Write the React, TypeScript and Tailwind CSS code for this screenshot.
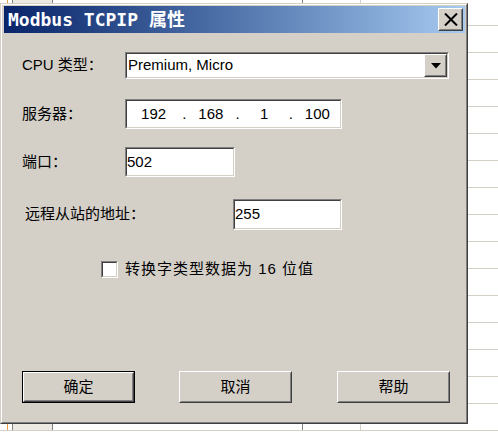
import React from 'react';

// Hoja de cálculo de fondo (solo se ven los bordes)
const rows = Array.from({ length: 16 });

const Spreadsheet: React.FC = () => (
  <div className="flex flex-col">
    {rows.map((_, i) => (
      <div
        key={i}
        className={`flex border-b border-[#d4d0c8] ${i === 0 ? 'h-[26px]' : 'h-[27px]'}`}
      >
        <div className="w-[8px] border-r border-[#e8a040]" />
        <div className="w-[4px]" />
        <div className="w-[41px] bg-[#ece9e2] border-l border-r border-[#808080]" />
        <div className="w-[250px] border-r border-[#808080]" />
        <div className="w-[58px] border-r border-[#d4d0c8]" />
        <div className="flex-1" />
      </div>
    ))}
  </div>
);

// Campo hundido estilo Windows clásico
const Sunken: React.FC<{ className?: string; children?: React.ReactNode }> = ({ className, children }) => (
  <div className={`border border-t-[#808080] border-l-[#808080] border-b-white border-r-white ${className ?? ''}`}>
    <div className="h-full w-full border border-t-[#404040] border-l-[#404040] border-b-[#d4d0c8] border-r-[#d4d0c8] bg-white flex items-center">
      {children}
    </div>
  </div>
);

const Raised: React.FC<{ className?: string; children?: React.ReactNode }> = ({ className, children }) => (
  <div className={`border border-t-white border-l-white border-b-[#404040] border-r-[#404040] bg-[#d4d0c8] ${className ?? ''}`}>
    <div className="h-full w-full border border-t-[#d4d0c8] border-l-[#d4d0c8] border-b-[#808080] border-r-[#808080] flex items-center justify-center">
      {children}
    </div>
  </div>
);

const Octet: React.FC<{ value: string; dot?: boolean }> = ({ value, dot }) => (
  <div className="flex-1 flex items-center h-full">
    {dot && <span className="w-[8px] pl-[2px]">.</span>}
    <span className="flex-1 text-center">{value}</span>
  </div>
);

const App: React.FC = () => {
  return (
    <div
      className="relative w-[498px] h-[438px] overflow-hidden bg-white text-black text-[15px]"
      style={{ fontFamily: '"Liberation Sans", "Noto Sans CJK SC", sans-serif' }}
    >
      <Spreadsheet />

      {/* Ventana de diálogo */}
      <div className="absolute left-0 top-[3px] w-[468px] h-[421px] border border-t-[#d4d0c8] border-l-[#d4d0c8] border-b-[#404040] border-r-[#404040]">
        <div className="h-full w-full border border-t-white border-l-white border-b-[#808080] border-r-[#808080] bg-[#d4d0c8] p-[1px] pl-[2px] flex flex-col">
          {/* Barra de título */}
          <div className="h-[27px] flex items-center justify-between bg-gradient-to-r from-[#0a246a] to-[#a6caf0] pl-[4px] pr-[2px]">
            <span
              className="text-white font-bold text-[18px] leading-none"
              style={{ fontFamily: '"DejaVu Sans Mono", "Noto Sans CJK SC", monospace' }}
            >
              Modbus TCPIP 属性
            </span>
            <Raised className="w-[25px] h-[23px]">
              <svg width="14" height="13" viewBox="0 0 14 13">
                <path d="M1 0.5 L13 12.5 M13 0.5 L1 12.5" stroke="black" strokeWidth="2" />
              </svg>
            </Raised>
          </div>

          {/* Contenido */}
          <div className="flex flex-col pl-[18px]">
            <div className="flex items-center mt-[19px] h-[27px]">
              <span className="w-[103px]">CPU 类型：</span>
              <Sunken className="w-[324px] h-[27px]">
                <span className="flex-1 pl-[1px]">Premium, Micro</span>
                <Raised className="w-[23px] h-[23px]">
                  <svg width="10" height="6" viewBox="0 0 10 6">
                    <path d="M0 0 H10 L5 5.5 Z" fill="black" />
                  </svg>
                </Raised>
              </Sunken>
            </div>

            <div className="flex items-center mt-[20px] h-[30px]">
              <span className="w-[103px]">服务器：</span>
              <Sunken className="w-[217px] h-[30px]">
                <Octet value="192" />
                <Octet value="168" dot />
                <Octet value="1" dot />
                <Octet value="100" dot />
              </Sunken>
            </div>

            <div className="flex items-center mt-[18px] h-[30px]">
              <span className="w-[103px]">端口：</span>
              <Sunken className="w-[110px] h-[30px]">
                <span>502</span>
              </Sunken>
            </div>

            <div className="flex items-center mt-[22px] h-[31px]">
              <span className="w-[211px] pl-[3px]">远程从站的地址：</span>
              <Sunken className="w-[109px] h-[31px]">
                <span>255</span>
              </Sunken>
            </div>

            <div className="flex items-center mt-[31px] h-[17px] pl-[79px]">
              <Sunken className="w-[17px] h-[17px]" />
              <span className="ml-[7px] tracking-[1px]">转换字类型数据为 16 位值</span>
            </div>

            {/* Botones */}
            <div className="flex items-center mt-[93px] gap-[44px]">
              <div className="w-[113px] h-[32px] border border-black">
                <Raised className="w-full h-full">确定</Raised>
              </div>
              <Raised className="w-[113px] h-[32px]">取消</Raised>
              <Raised className="w-[113px] h-[32px] ml-[1px]">帮助</Raised>
            </div>
          </div>
        </div>
      </div>
    </div>
  );
};

export default App;
